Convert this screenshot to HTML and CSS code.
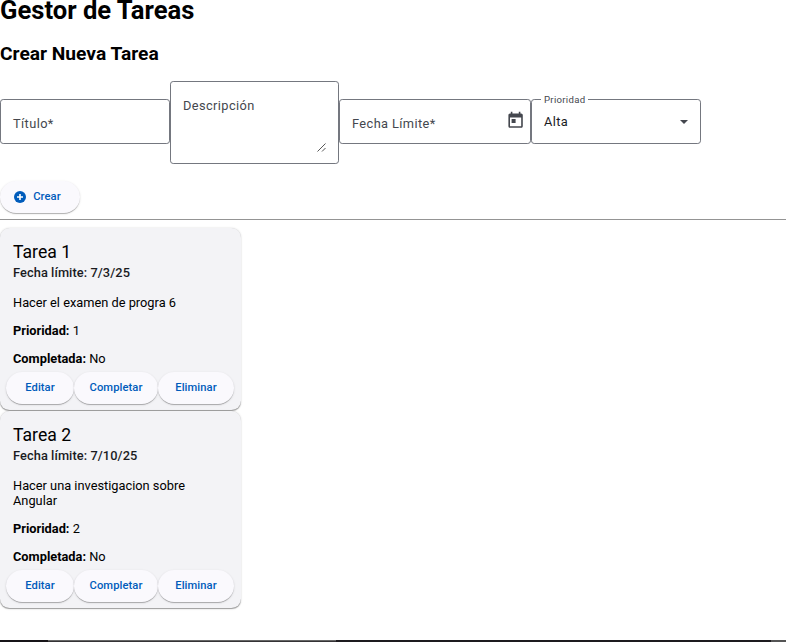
FILE: index.html
```html
<!DOCTYPE html>
<html lang="es">
<head>
<meta charset="utf-8">
<title>Gestor de Tareas</title>
<link rel="stylesheet" href="styles.css">
</head>
<body>
<main class="page">
  <h1>Gestor de Tareas</h1>
  <h2>Crear Nueva Tarea</h2>
  <form class="form">
    <div class="field title-field"><span class="label">Título*</span></div>
    <div class="field area-field"><span class="label">Descripción</span>
      <svg class="grip" width="9" height="9" viewBox="0 0 9 9"><path d="M.5 8.500L8.500 .5M5 8.500L8.500 5" stroke="#444" stroke-width=".9" fill="none"/></svg>
    </div>
    <div class="field date-field"><span class="label">Fecha Límite*</span>
      <svg class="calendar" width="19.200" height="19.200" viewBox="0 0 24 24" fill="#44474e"><path d="M19 3h-1V1h-2v2H8V1H6v2H5c-1.110 0-1.990.9-1.990 2L3 19c0 1.100.89 2 2 2h14c1.100 0 2-.9 2-2V5c0-1.100-.9-2-2-2zm0 16H5V8h14v11zM7 10h5v5H7z"/></svg>
    </div>
    <div class="field select-field"><span class="float-label">Prioridad</span><span class="value">Alta</span>
      <svg class="arrow" width="8" height="4" viewBox="0 0 8 4"><path d="M0 0h8L4 4z" fill="#44474e"/></svg>
    </div>
  </form>
  <button class="btn create" type="button">
    <svg width="12" height="12" viewBox="0 0 12 12"><circle cx="6" cy="6" r="6" fill="#005cbb"/><path d="M6 3v6M3 6h6" stroke="#fff" stroke-width="1.600"/></svg>
    <span>Crear</span>
  </button>
  <hr>
  <section class="tasks">
    <article class="card">
      <h3>Tarea 1</h3>
      <p class="date">Fecha límite: 7/3/25</p>
      <p class="text">Hacer el examen de progra 6</p>
      <p class="text"><strong>Prioridad:</strong> 1</p>
      <p class="text"><strong>Completada:</strong> No</p>
      <div class="actions">
        <button class="btn edit" type="button">Editar</button>
        <button class="btn complete" type="button">Completar</button>
        <button class="btn delete" type="button">Eliminar</button>
      </div>
    </article>
    <article class="card">
      <h3>Tarea 2</h3>
      <p class="date">Fecha límite: 7/10/25</p>
      <p class="text">Hacer una investigacion sobre Angular</p>
      <p class="text"><strong>Prioridad:</strong> 2</p>
      <p class="text"><strong>Completada:</strong> No</p>
      <div class="actions">
        <button class="btn edit" type="button">Editar</button>
        <button class="btn complete" type="button">Completar</button>
        <button class="btn delete" type="button">Eliminar</button>
      </div>
    </article>
  </section>
  <footer class="strip"><span class="strip-start"></span><span class="strip-mid"></span><span class="strip-rest"></span><span class="strip-end"></span></footer>
</main>
</body>
</html>
```
FILE: styles.css
```css
* { box-sizing: border-box; }
body { margin: 0; background: #fff; color: #000; font-family: Roboto, "Liberation Sans", sans-serif; font-size: 12.8px; }
.page { height: 642px; overflow: hidden; display: flex; flex-direction: column; align-items: flex-start; }
h1, h2, h3, p { margin: 0; flex: none; }
h1 { font-size: 25.6px; line-height: 30px; margin-top: -5px; font-weight: 700; }
h2 { font-size: 19.2px; line-height: 24px; margin-top: 17px; font-weight: 700; }
.form { display: flex; align-items: flex-start; height: 83px; margin-top: 15px; flex: none; }
.field { position: relative; display: flex; align-items: center; height: 45px; margin-top: 18px; padding: 0 12px; border: 1px solid #74777f; border-radius: 3.2px; letter-spacing: .4px; }
.label { color: #44474e; line-height: 19px; padding-top: 3px; }
.title-field { width: 170px; }
.area-field { width: 169px; height: 83px; margin-top: 0; align-items: flex-start; padding-top: 11px; }
.date-field { width: 192px; justify-content: space-between; padding-right: 5px; }
.select-field { width: 170px; justify-content: space-between; }
.value { color: #1a1b1f; }
.grip { position: absolute; right: 12px; bottom: 11px; }
.calendar { margin-top: -2px; }
.float-label { position: absolute; left: 9px; top: -7px; padding: 0 3px; background: #fff; color: #44474e; font-size: 9.6px; line-height: 14px; letter-spacing: .3px; }
.btn { display: flex; align-items: center; justify-content: center; height: 32px; flex: none; padding: 0; border: 0; border-radius: 16px; background: #faf9fd; color: #005cbb; font: 500 11.2px/16px Roboto, "Liberation Sans", sans-serif; letter-spacing: .08px; box-shadow: 0 1.6px .8px -.8px rgba(0,0,0,.2), 0 .8px .8px rgba(0,0,0,.14), 0 .8px 2.400px rgba(0,0,0,.12); }
.create { width: 80px; margin-top: 17px; gap: 7px; padding-right: 5px; }
hr { width: 100%; height: 1px; border: 0; background: #949494; margin: 6px 0 0; flex: none; }
.tasks { display: flex; flex-direction: column; margin-top: 8px; gap: 1px; width: 241px; }
.card { padding: 13px 6px 6px; background: #f3f3f6; border-radius: 9.6px; box-shadow: 0 1.6px .8px -.8px rgba(0,0,0,.2), 0 .8px .8px rgba(0,0,0,.14), 0 .8px 2.400px rgba(0,0,0,.12); }
.card h3 { font-size: 17.6px; line-height: 22px; font-weight: 400; padding-left: 7px; }
.date { font-size: 12.8px; font-weight: 500; line-height: 19px; padding-left: 7px; letter-spacing: .08px; color: #1a1b1f; margin-bottom: 13px; }
.text { line-height: 15px; padding: 0 30px 0 7px; margin-bottom: 13px; }
.actions { display: flex; margin-top: -7px; }
.edit { width: 68px; }
.complete { width: 84px; }
.delete { width: 76px; }
.strip { display: flex; width: 100%; height: 2px; margin-top: auto; flex: none; }
.strip-start { width: 48px; background: #171418; }
.strip-mid { width: 288px; background: #353336; border-top: 1px solid #666; }
.strip-rest { flex: 1; background: #1d1b1f; }
.strip-end { width: 15px; background: #555; }
```
